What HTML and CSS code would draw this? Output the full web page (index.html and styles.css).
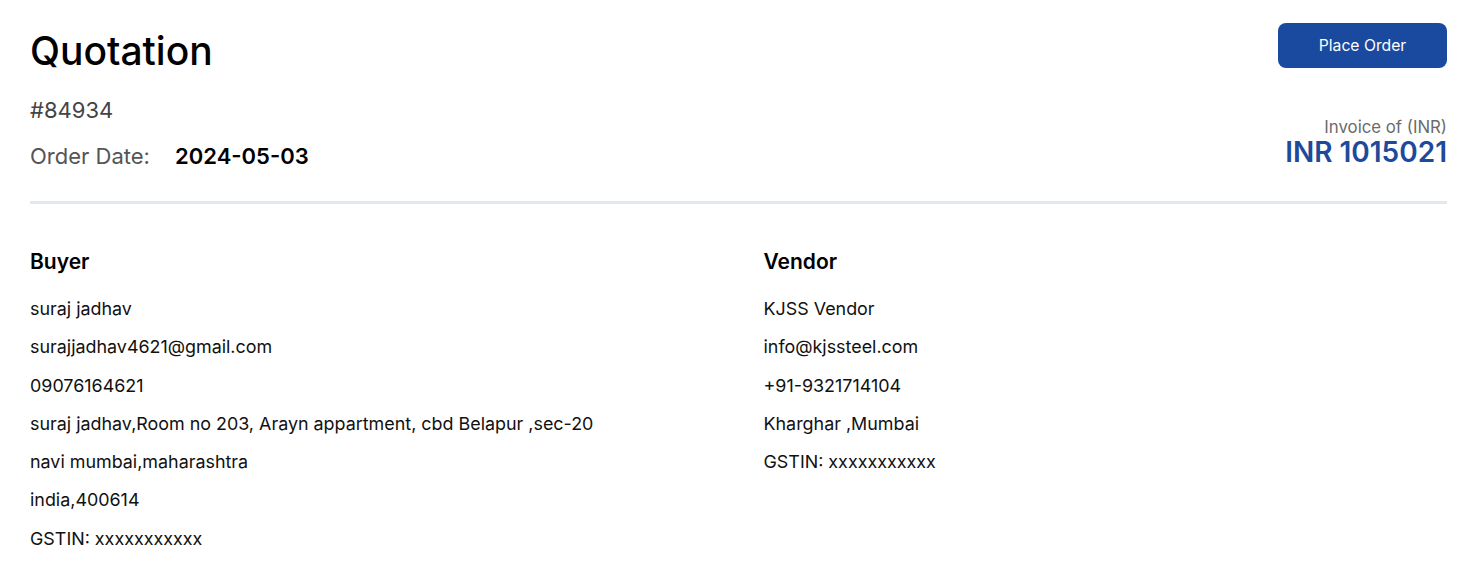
FILE: index.html
```html
<!DOCTYPE html>
<html lang="en">
<head>
    <meta charset="UTF-8">
    <meta name="viewport" content="width=device-width, initial-scale=1.0">
    <title>Quotation</title>
    <link rel="stylesheet" href="styles.css">
</head>
<body>
    <div class="page">
        <div class="top">
            <div class="top-left">
                <h1>Quotation</h1>
                <p class="quote-no">#84934</p>
                <p class="order-date">Order Date: <span>2024-05-03</span></p>
            </div>
            <div class="top-right">
                <button class="btn-order">Place Order</button>
                <div class="total">
                    <p class="total-label">Invoice of (INR)</p>
                    <p class="total-amount">INR 1015021</p>
                </div>
            </div>
        </div>

        <hr class="divider">

        <div class="parties">
            <div class="party">
                <h2>Buyer</h2>
                <p>suraj jadhav</p>
                <p>surajjadhav4621@gmail.com</p>
                <p>09076164621</p>
                <p>suraj jadhav,Room no 203, Arayn appartment, cbd Belapur ,sec-20</p>
                <p>navi mumbai,maharashtra</p>
                <p>india,400614</p>
                <p>GSTIN: xxxxxxxxxxx</p>
            </div>
            <div class="party">
                <h2>Vendor</h2>
                <p>KJSS Vendor</p>
                <p>info@kjssteel.com</p>
                <p>+91-9321714104</p>
                <p>Kharghar ,Mumbai</p>
                <p>GSTIN: xxxxxxxxxxx</p>
            </div>
        </div>
    </div>
</body>
</html>
```

FILE: styles.css
```css
body {
    font-family: Inter, "Noto Sans", sans-serif;
    background-color: #fff;
    color: #111;
    margin: 0;
    padding: 0;
}
.page {
    padding: 23px 25px 0 30px;
}
.top {
    display: flex;
    justify-content: space-between;
    align-items: flex-start;
}
h1 {
    font-size: 39px;
    font-weight: 500;
    margin: 3px 0 0;
    line-height: 50px;
    color: #000;
}
.quote-no {
    font-size: 22px;
    color: #444;
    margin: 19px 0 0;
    line-height: 30px;
}
.order-date {
    font-size: 22px;
    color: #555;
    margin: 16px 0 0;
    line-height: 30px;
}
.order-date span {
    color: #000;
    font-weight: 600;
    margin-left: 19px;
}
.top-right {
    display: flex;
    flex-direction: column;
    align-items: flex-end;
}
.btn-order {
    font-family: inherit;
    font-size: 15.7px;
    color: #fff;
    background-color: #1a4aa0;
    border: none;
    border-radius: 8px;
    width: 169px;
    height: 45px;
    cursor: pointer;
}
.total {
    text-align: right;
    margin-top: 49px;
}
.total-label {
    margin: 0;
    font-size: 16.8px;
    color: #6b6b6b;
    line-height: 21px;
}
.total-amount {
    margin: 0;
    font-size: 28px;
    font-weight: 600;
    color: #1e4a9a;
    line-height: 28px;
}
.divider {
    border: none;
    height: 3px;
    background-color: #e2e8f0;
    margin: 30px 0 0;
}
.parties {
    display: grid;
    grid-template-columns: 1fr 1fr;
    column-gap: 50px;
    padding-top: 40px;
}
h2 {
    font-size: 21px;
    font-weight: 600;
    margin: 0 0 18px;
    line-height: 36px;
    color: #000;
}
.party p {
    font-size: 17.9px;
    margin: 0 0 16.3px;
    line-height: 22px;
    color: #111;
}
```
